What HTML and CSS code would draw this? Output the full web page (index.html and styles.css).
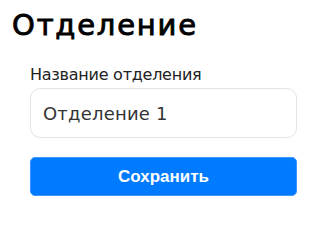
FILE: index.html
```html
<!DOCTYPE html>
<html lang="ru">
<head>
<meta charset="utf-8">
<title>Отделение</title>
<link rel="stylesheet" href="styles.css">
</head>
<body>
<div class="page">
  <h1 class="title">Отделение</h1>
  <form class="form">
    <label class="label" for="name">Название отделения</label>
    <input class="input" id="name" type="text" value="Отделение 1">
    <button class="btn" type="button">Сохранить</button>
  </form>
</div>
</body>
</html>
```
FILE: styles.css
```css
html, body {
  margin: 0;
  padding: 0;
  background: #fff;
}
.page {
  padding: 8px 30px 0 12px;
  font-family: "DejaVu Sans", "Open Sans", sans-serif;
}
.title {
  margin: 0;
  font-size: 29px;
  line-height: 34px;
  font-weight: 400;
  letter-spacing: 1.8px;
  -webkit-text-stroke: 0.9px #000;
  color: #000;
}
.form {
  display: flex;
  flex-direction: column;
  margin: 23px 0 0 18px;
}
.label {
  font-size: 16px;
  line-height: 20px;
  letter-spacing: -0.25px;
  color: #222;
}
.input {
  margin-top: 3px;
  height: 50px;
  box-sizing: border-box;
  border: 1px solid #e4e4e4;
  border-radius: 10px;
  padding: 0 12px;
  font-family: inherit;
  font-size: 18px;
  letter-spacing: 0.2px;
  color: #333;
  background: #fff;
  outline: none;
}
.btn {
  margin-top: 19px;
  height: 39px;
  box-sizing: border-box;
  border: 1px solid #3d95ff;
  border-radius: 5px;
  background: #007bff;
  color: #fff;
  font-family: "Liberation Sans", Arial, sans-serif;
  font-weight: 700;
  font-size: 17px;
  cursor: pointer;
}
```
